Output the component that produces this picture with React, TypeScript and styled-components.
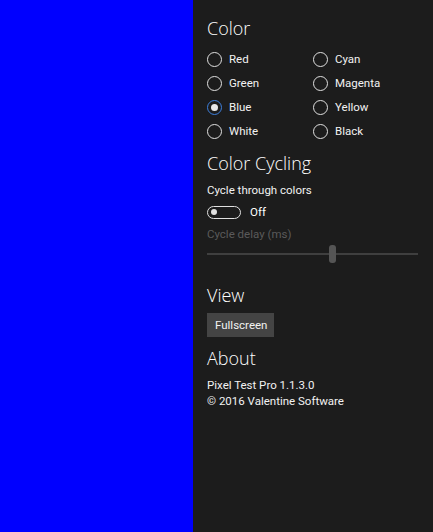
import React from 'react';
import styled, { createGlobalStyle } from 'styled-components';

const Global = createGlobalStyle`
  html, body { margin: 0; padding: 0; background: #1c1c1c; }
  body { font-family: "Open Sans", "Noto Sans", sans-serif; }
`;

const Page = styled.div`
  display: flex;
  height: 532px;
  overflow: hidden;
`;

const Swatch = styled.div<{ $color: string }>`
  width: 193px;
  flex: none;
  background: ${p => p.$color};
`;

const Panel = styled.section`
  flex: 1;
  background: #1c1c1c;
  color: #ffffff;
  padding: 14px 14px 0 14px;
  display: flex;
  flex-direction: column;
`;

const Heading = styled.h2<{ $gap?: number }>`
  margin: ${p => p.$gap ?? 0}px 0 0 0;
  font-size: 18px;
  font-weight: 300;
  line-height: 28px;
  height: 28px;
`;

const body = `
  font-family: Roboto, "Open Sans", sans-serif;
  font-size: 11.5px;
`;

const RadioGrid = styled.div`
  display: grid;
  grid-template-columns: 106px 106px;
  grid-auto-rows: 24px;
  margin-top: 5px;
`;

const RadioItem = styled.label`
  display: flex;
  align-items: center;
  gap: 7px;
  ${body}
  color: #f2f2f2;
`;

const RadioDot = styled.span<{ $checked?: boolean }>`
  box-sizing: border-box;
  width: 15px;
  height: 15px;
  border-radius: 50%;
  border: 1.5px solid ${p => (p.$checked ? '#3d7fdc' : '#e0e0e0')};
  display: flex;
  align-items: center;
  justify-content: center;
  &::after {
    content: '';
    display: ${p => (p.$checked ? 'block' : 'none')};
    width: 7px;
    height: 7px;
    border-radius: 50%;
    background: #e8e8e8;
  }
`;

const Text = styled.div<{ $gap?: number; $dim?: boolean }>`
  margin-top: ${p => p.$gap ?? 0}px;
  ${body}
  line-height: 16px;
  color: ${p => (p.$dim ? '#5a5a5a' : '#f2f2f2')};
`;

const ToggleRow = styled.div`
  display: flex;
  align-items: center;
  gap: 9px;
  height: 22px;
  margin-top: 3px;
  ${body}
`;

const Toggle = styled.span`
  box-sizing: border-box;
  width: 34px;
  height: 13px;
  border: 1.5px solid #e0e0e0;
  border-radius: 7px;
  display: flex;
  align-items: center;
  padding-left: 2.5px;
  &::after {
    content: '';
    width: 6px;
    height: 6px;
    border-radius: 50%;
    background: #e0e0e0;
  }
`;

const Slider = styled.div`
  position: relative;
  height: 18px;
  width: 211px;
  margin-top: 3px;
  display: flex;
  align-items: center;
`;

const Track = styled.div`
  height: 2px;
  width: 100%;
  background: #3f3f3f;
`;

const Thumb = styled.div`
  position: absolute;
  top: 0;
  width: 7px;
  height: 18px;
  border-radius: 3px;
  background: #555555;
`;

const Button = styled.button`
  align-self: flex-start;
  margin-top: 4px;
  height: 24px;
  padding: 0 7px 0 8px;
  border: none;
  background: #444444;
  color: #f2f2f2;
  ${body}
`;

const colors = [
  ['Red', 'Cyan'],
  ['Green', 'Magenta'],
  ['Blue', 'Yellow'],
  ['White', 'Black'],
];

const App = () => {
  const selected = 'Blue';
  const delay = 0.6;
  return (
    <Page>
      <Global />
      <Swatch $color="#0000ff" />
      <Panel>
        <Heading>Color</Heading>
        <RadioGrid>
          {colors.flat().map(c => (
            <RadioItem key={c}>
              <RadioDot $checked={c === selected} />
              {c}
            </RadioItem>
          ))}
        </RadioGrid>
        <Heading $gap={6}>Color Cycling</Heading>
        <Text $gap={5}>Cycle through colors</Text>
        <ToggleRow>
          <Toggle />
          Off
        </ToggleRow>
        <Text $gap={3} $dim>Cycle delay (ms)</Text>
        <Slider>
          <Track />
          <Thumb style={{ left: `${delay * 204}px` }} />
        </Slider>
        <Heading $gap={18}>View</Heading>
        <Button>Fullscreen</Button>
        <Heading $gap={7}>About</Heading>
        <Text $gap={5}>Pixel Test Pro 1.1.3.0</Text>
        <Text>© 2016 Valentine Software</Text>
      </Panel>
    </Page>
  );
};

export default App;
